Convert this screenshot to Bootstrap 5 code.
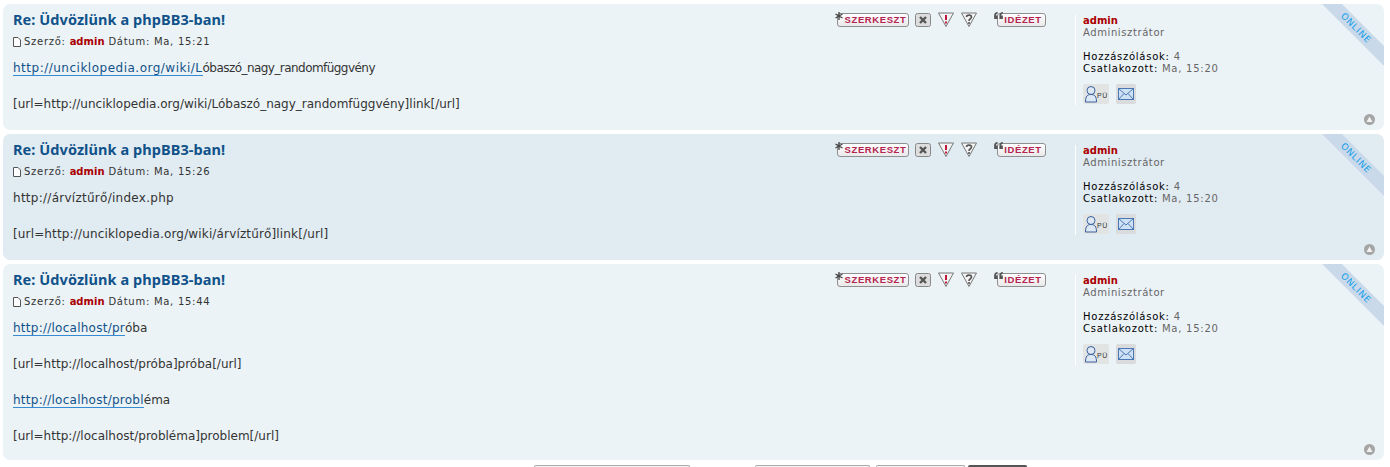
<!DOCTYPE html>
<html lang="hu">
<head>
  <meta charset="UTF-8">
  <title>Re: Üdvözlünk a phpBB3-ban!</title>
  <link rel="stylesheet" href="https://cdn.jsdelivr.net/npm/bootstrap@5.3.1/dist/css/bootstrap.min.css">
  <style>
    html, body { height: 467px; overflow: hidden; }
    body { background: #fff; font-family: "DejaVu Sans", Verdana, sans-serif; font-size: 10px; color: #333; }
    .post-list { padding: 4px 6px 0 3px; }
    .post-box { position: relative; overflow: hidden; background: #ecf3f7; border-radius: 7px; margin-bottom: 4px; padding: 5px 10px; height: 126px; }
    .post-box.alt { background: #e1ebf2; }
    .post-box.tall { height: 196px; }
    .post-main { width: 1060px; }
    .post-title { font-family: "Noto Sans", sans-serif; font-size: 14.5px; font-weight: 700; letter-spacing: .07px; color: #105289; line-height: 19px; margin: 1px 0 0; }
    .post-meta { font-size: 10px; line-height: 14px; margin: 6px 0 0; color: #333; letter-spacing: .73px; }
    .post-meta svg { margin-right: 3px; }
    .post-meta b { color: #a00; font-weight: 700; letter-spacing: 0; }
    .post-text { font-size: 12px; line-height: 18px; margin-top: 10px; color: #333; }
    .post-text p { margin: 0 0 18px; }
    .post-text a { color: #105289; text-decoration: none; border-bottom: 1px solid #368ad2; letter-spacing: .25px; }
    .post-text a.link-wide { letter-spacing: .5px; }
    .text-tight { letter-spacing: -.55px; }
    .post-text .text-wide { letter-spacing: .27px; }
    .post-text .text-mid { letter-spacing: .15px; }
    .post-tools { position: absolute; left: 832px; top: 8px; height: 15px; }
    .tool-pill { display: block; height: 14px; line-height: 12px; border: 1px solid #8f8f8f; border-radius: 3px; background: linear-gradient(#fff, #e9e9e9); color: #b5244f; font-family: "Liberation Sans", sans-serif; font-size: 9.500px; font-weight: 700; letter-spacing: .6px; text-align: center; }
    .tool-edit { width: 72px; margin-left: -6px; padding-left: 5px; }
    .tool-quote { width: 49px; margin-left: -6px; padding-left: 3px; }
    .tool-x { margin-left: 6px; }
    .tool-warn { margin-left: 7px; }
    .tool-mark { margin-left: 17px; }
    .tool-over { position: relative; z-index: 1; }
    .post-side { position: absolute; left: 1072px; top: 11px; width: 230px; height: 90px; border-left: 1px solid #fff; padding-left: 7px; line-height: 12px; letter-spacing: .6px; }
    .side-name { color: #a00; font-weight: 700; letter-spacing: 0; }
    .side-rank { color: #666; }
    .side-stats { margin-top: 12px; color: #000; letter-spacing: .75px; }
    .side-stats span { color: #666; }
    .side-btns { display: flex; gap: 7px; margin-top: 9px; }
    .side-btn { display: flex; align-items: center; justify-content: center; height: 20px; background: #e2e4e4; border-radius: 2px; }
    .side-pm { width: 26px; }
    .side-mail { width: 20px; background: #d9dbdc; }
    .online-tag { position: absolute; right: -18px; top: 17px; width: 92px; height: 14px; line-height: 14px; background: #c9d9ea; color: #14a0ea; transform: rotate(45deg); font-size: 9px; letter-spacing: .8px; text-align: center; }
    .top-link { position: absolute; right: 9px; bottom: 5px; }
    .pager-row { display: flex; padding: 1px 0 0 531px; height: 10px; }
    .pager-item { height: 10px; border: 1px solid #aaa; border-bottom: 0; border-radius: 2px 2px 0 0; background: #f4f4f4; }
    .pager-a { width: 156px; }
    .pager-b { width: 115px; margin-left: 65px; }
    .pager-c { width: 89px; margin-left: 6px; }
    .pager-d { width: 59px; margin-left: 3px; background: #555; border-color: #555; }
  </style>
</head>
<body>
  <div class="post-list">

    <div class="post-box">
      <div class="post-main">
        <h3 class="post-title">Re: Üdvözlünk a phpBB3-ban!</h3>
        <p class="post-meta"><svg width="8" height="10" viewBox="0 0 8 10"><path d="M.5.5h4.5l2.500 2.500v6.500h-7z" fill="#fff" stroke="#555"/></svg>Szerző: <b>admin</b> Dátum: Ma, 15:21</p>
        <div class="post-text">
          <p><a class="link-wide" href="#">http://unciklopedia.org/wiki/L</a><span class="text-tight">óbaszó_nagy_randomfüggvény</span></p>
          <p>[url=http://unciklopedia.org/wiki/Lóbaszó_nagy_randomfüggvény]link[/url]</p>
        </div>
      </div>
      <div class="post-tools d-flex align-items-center">
        <svg class="tool-over align-self-start" width="8" height="8" viewBox="0 0 8 8"><path d="M4 0v8M.5 2l7 4M7.500 2l-7 4" stroke="#444" stroke-width="1.300"/></svg>
        <span class="tool-pill tool-edit">SZERKESZT</span>
        <svg class="tool-x" width="16" height="14" viewBox="0 0 16 14"><rect x=".5" y=".5" width="15" height="13" rx="2" fill="#ddd" stroke="#888"/><path d="M5 4l6 6M11 4l-6 6" stroke="#555" stroke-width="2.400"/></svg>
        <svg class="tool-warn" width="16" height="15" viewBox="0 0 16 15"><path d="M.5 1h15L8 14.500z" fill="#f4f4f4" stroke="#777"/><path d="M8 3v5M8 9.500v2" stroke="#c2183c" stroke-width="2"/></svg>
        <svg class="tool-warn" width="16" height="15" viewBox="0 0 16 15"><path d="M.5 1h15L8 14.500z" fill="#f4f4f4" stroke="#777"/><path d="M5.500 5c0-2.500 5-2.500 5 0 0 2-2.500 1.500-2.500 4M8 10v2" fill="none" stroke="#555" stroke-width="1.600"/></svg>
        <svg class="tool-mark tool-over align-self-start" width="9" height="7" viewBox="0 0 10 8"><path d="M4 0C1.500 0 0 1.500 0 4v4h4V4H2c0-1.500 1-2 2-2zM10 0C7.500 0 6 1.500 6 4v4h4V4H8c0-1.500 1-2 2-2z" fill="#555"/></svg>
        <span class="tool-pill tool-quote">IDÉZET</span>
      </div>
      <div class="post-side">
        <div class="side-name">admin</div>
        <div class="side-rank">Adminisztrátor</div>
        <div class="side-stats">Hozzászólások: <span>4</span><br>Csatlakozott: <span>Ma, 15:20</span></div>
        <div class="side-btns">
          <span class="side-btn side-pm"><svg width="24" height="18" viewBox="0 0 24 18"><circle cx="7" cy="5.500" r="4" fill="#dce8f4" stroke="#3a5f9a"/><path d="M1.500 17c0-6 2-7.500 5.500-7.500s5.500 1.500 5.500 7.500z" fill="#dce8f4" stroke="#3a5f9a"/><text x="13" y="13" font-size="7" fill="#333" font-family="Liberation Sans">PÜ</text></svg></span>
          <span class="side-btn side-mail"><svg width="16" height="12" viewBox="0 0 16 12"><rect x=".5" y=".5" width="15" height="11" fill="#cfe2f5" stroke="#4a78b5"/><path d="M.5.5L8 7l7.500-6.500M.5 11.500L6 5.500M15.500 11.500L10 5.500" fill="none" stroke="#4a78b5"/></svg></span>
        </div>
      </div>
      <div class="online-tag">ONLINE</div>
      <svg class="top-link" width="11" height="11" viewBox="0 0 11 11"><circle cx="5.500" cy="5.500" r="5.500" fill="#a5a5a5"/><path d="M5.500 2.500L8.500 8h-6z" fill="#f2f2f2"/></svg>
    </div>

    <div class="post-box alt">
      <div class="post-main">
        <h3 class="post-title">Re: Üdvözlünk a phpBB3-ban!</h3>
        <p class="post-meta"><svg width="8" height="10" viewBox="0 0 8 10"><path d="M.5.5h4.5l2.500 2.500v6.500h-7z" fill="#fff" stroke="#555"/></svg>Szerző: <b>admin</b> Dátum: Ma, 15:26</p>
        <div class="post-text">
          <p class="text-wide">http://árvíztűrő/index.php</p>
          <p class="text-mid">[url=http://unciklopedia.org/wiki/árvíztűrő]link[/url]</p>
        </div>
      </div>
      <div class="post-tools d-flex align-items-center">
        <svg class="tool-over align-self-start" width="8" height="8" viewBox="0 0 8 8"><path d="M4 0v8M.5 2l7 4M7.500 2l-7 4" stroke="#444" stroke-width="1.300"/></svg>
        <span class="tool-pill tool-edit">SZERKESZT</span>
        <svg class="tool-x" width="16" height="14" viewBox="0 0 16 14"><rect x=".5" y=".5" width="15" height="13" rx="2" fill="#ddd" stroke="#888"/><path d="M5 4l6 6M11 4l-6 6" stroke="#555" stroke-width="2.400"/></svg>
        <svg class="tool-warn" width="16" height="15" viewBox="0 0 16 15"><path d="M.5 1h15L8 14.500z" fill="#f4f4f4" stroke="#777"/><path d="M8 3v5M8 9.500v2" stroke="#c2183c" stroke-width="2"/></svg>
        <svg class="tool-warn" width="16" height="15" viewBox="0 0 16 15"><path d="M.5 1h15L8 14.500z" fill="#f4f4f4" stroke="#777"/><path d="M5.500 5c0-2.500 5-2.500 5 0 0 2-2.500 1.500-2.500 4M8 10v2" fill="none" stroke="#555" stroke-width="1.600"/></svg>
        <svg class="tool-mark tool-over align-self-start" width="9" height="7" viewBox="0 0 10 8"><path d="M4 0C1.500 0 0 1.500 0 4v4h4V4H2c0-1.500 1-2 2-2zM10 0C7.500 0 6 1.500 6 4v4h4V4H8c0-1.500 1-2 2-2z" fill="#555"/></svg>
        <span class="tool-pill tool-quote">IDÉZET</span>
      </div>
      <div class="post-side">
        <div class="side-name">admin</div>
        <div class="side-rank">Adminisztrátor</div>
        <div class="side-stats">Hozzászólások: <span>4</span><br>Csatlakozott: <span>Ma, 15:20</span></div>
        <div class="side-btns">
          <span class="side-btn side-pm"><svg width="24" height="18" viewBox="0 0 24 18"><circle cx="7" cy="5.500" r="4" fill="#dce8f4" stroke="#3a5f9a"/><path d="M1.500 17c0-6 2-7.500 5.500-7.500s5.500 1.500 5.500 7.500z" fill="#dce8f4" stroke="#3a5f9a"/><text x="13" y="13" font-size="7" fill="#333" font-family="Liberation Sans">PÜ</text></svg></span>
          <span class="side-btn side-mail"><svg width="16" height="12" viewBox="0 0 16 12"><rect x=".5" y=".5" width="15" height="11" fill="#cfe2f5" stroke="#4a78b5"/><path d="M.5.5L8 7l7.500-6.500M.5 11.500L6 5.500M15.500 11.500L10 5.500" fill="none" stroke="#4a78b5"/></svg></span>
        </div>
      </div>
      <div class="online-tag">ONLINE</div>
      <svg class="top-link" width="11" height="11" viewBox="0 0 11 11"><circle cx="5.500" cy="5.500" r="5.500" fill="#a5a5a5"/><path d="M5.500 2.500L8.500 8h-6z" fill="#f2f2f2"/></svg>
    </div>

    <div class="post-box tall">
      <div class="post-main">
        <h3 class="post-title">Re: Üdvözlünk a phpBB3-ban!</h3>
        <p class="post-meta"><svg width="8" height="10" viewBox="0 0 8 10"><path d="M.5.5h4.5l2.500 2.500v6.500h-7z" fill="#fff" stroke="#555"/></svg>Szerző: <b>admin</b> Dátum: Ma, 15:44</p>
        <div class="post-text">
          <p><a href="#">http://localhost/pr</a>óba</p>
          <p>[url=http://localhost/próba]próba[/url]</p>
          <p><a href="#">http://localhost/probl</a>éma</p>
          <p>[url=http://localhost/probléma]problem[/url]</p>
        </div>
      </div>
      <div class="post-tools d-flex align-items-center">
        <svg class="tool-over align-self-start" width="8" height="8" viewBox="0 0 8 8"><path d="M4 0v8M.5 2l7 4M7.500 2l-7 4" stroke="#444" stroke-width="1.300"/></svg>
        <span class="tool-pill tool-edit">SZERKESZT</span>
        <svg class="tool-x" width="16" height="14" viewBox="0 0 16 14"><rect x=".5" y=".5" width="15" height="13" rx="2" fill="#ddd" stroke="#888"/><path d="M5 4l6 6M11 4l-6 6" stroke="#555" stroke-width="2.400"/></svg>
        <svg class="tool-warn" width="16" height="15" viewBox="0 0 16 15"><path d="M.5 1h15L8 14.500z" fill="#f4f4f4" stroke="#777"/><path d="M8 3v5M8 9.500v2" stroke="#c2183c" stroke-width="2"/></svg>
        <svg class="tool-warn" width="16" height="15" viewBox="0 0 16 15"><path d="M.5 1h15L8 14.500z" fill="#f4f4f4" stroke="#777"/><path d="M5.500 5c0-2.500 5-2.500 5 0 0 2-2.500 1.500-2.500 4M8 10v2" fill="none" stroke="#555" stroke-width="1.600"/></svg>
        <svg class="tool-mark tool-over align-self-start" width="9" height="7" viewBox="0 0 10 8"><path d="M4 0C1.500 0 0 1.500 0 4v4h4V4H2c0-1.500 1-2 2-2zM10 0C7.500 0 6 1.500 6 4v4h4V4H8c0-1.500 1-2 2-2z" fill="#555"/></svg>
        <span class="tool-pill tool-quote">IDÉZET</span>
      </div>
      <div class="post-side">
        <div class="side-name">admin</div>
        <div class="side-rank">Adminisztrátor</div>
        <div class="side-stats">Hozzászólások: <span>4</span><br>Csatlakozott: <span>Ma, 15:20</span></div>
        <div class="side-btns">
          <span class="side-btn side-pm"><svg width="24" height="18" viewBox="0 0 24 18"><circle cx="7" cy="5.500" r="4" fill="#dce8f4" stroke="#3a5f9a"/><path d="M1.500 17c0-6 2-7.500 5.500-7.500s5.500 1.500 5.500 7.500z" fill="#dce8f4" stroke="#3a5f9a"/><text x="13" y="13" font-size="7" fill="#333" font-family="Liberation Sans">PÜ</text></svg></span>
          <span class="side-btn side-mail"><svg width="16" height="12" viewBox="0 0 16 12"><rect x=".5" y=".5" width="15" height="11" fill="#cfe2f5" stroke="#4a78b5"/><path d="M.5.5L8 7l7.500-6.500M.5 11.500L6 5.500M15.500 11.500L10 5.500" fill="none" stroke="#4a78b5"/></svg></span>
        </div>
      </div>
      <div class="online-tag">ONLINE</div>
      <svg class="top-link" width="11" height="11" viewBox="0 0 11 11"><circle cx="5.500" cy="5.500" r="5.500" fill="#a5a5a5"/><path d="M5.500 2.500L8.500 8h-6z" fill="#f2f2f2"/></svg>
    </div>

    <div class="pager-row">
      <span class="pager-item pager-a"></span>
      <span class="pager-item pager-b"></span>
      <span class="pager-item pager-c"></span>
      <span class="pager-item pager-d"></span>
    </div>
  </div>
  <script src="https://cdn.jsdelivr.net/npm/bootstrap@5.3.1/dist/js/bootstrap.bundle.min.js"></script>
</body>
</html>
